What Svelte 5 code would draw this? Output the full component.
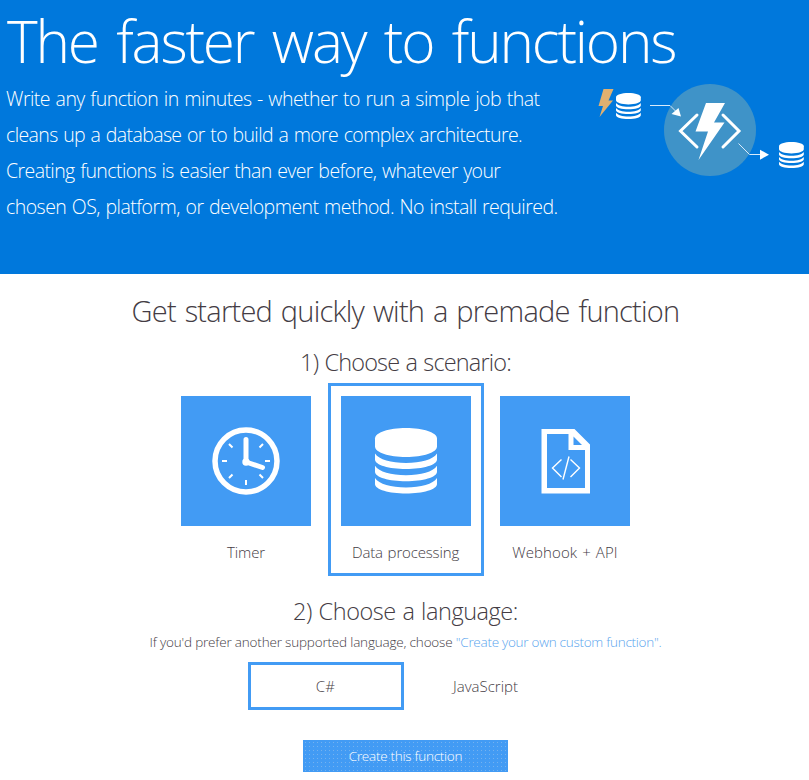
<script>
  let scenario = $state('data');
  let language = $state('csharp');
  const intro = [
    ['Write any function in minutes - whether to run a simple job that', -0.52],
    ['cleans up a database or to build a more complex architecture.', -0.6],
    ['Creating functions is easier than ever before, whatever your', -0.58],
    ['chosen OS, platform, or development method. No install required.', -0.53]
  ];
  const scenarios = [
    { id: 'timer', label: 'Timer', spacing: -0.1 },
    { id: 'data', label: 'Data processing', spacing: -0.15 },
    { id: 'webhook', label: 'Webhook + API', spacing: 0.1 }
  ];
  const languages = [
    { id: 'csharp', label: 'C#', spacing: 0.3 },
    { id: 'js', label: 'JavaScript', spacing: 0 }
  ];
</script>

{#snippet disks()}
  <path d="M0 10.5C0 4.5 14 0 31 0s31 4.5 31 10.5v8C62 24.500 48 29 31 29S0 24.500 0 18.500z" />
  {#each [0, 12.300, 24.600] as dy}
    <path transform="translate(0 {dy})" d="M0 25.500C4 31.500 16 35 31 35s27-3.500 31-9.500v6C62 37 48 41 31 41S0 37 0 31.500z" />
  {/each}
{/snippet}

<main>
  <header>
    <div class="copy">
      <h1>The faster way to functions</h1>
      <p>
        {#each intro as [line, spacing]}
          <span style="letter-spacing:{spacing}px">{line}</span>
        {/each}
      </p>
    </div>
    <svg class="hero" width="219" height="110" viewBox="0 0 219 110" fill="#fff">
      <path fill="#e0b070" d="M13.500 14H23.500L18.500 25.500H23L9.500 42L13 31H8.500z" />
      <g transform="translate(26 18) scale(.4 .395)">{@render disks()}</g>
      <circle cx="120" cy="55" r="46" fill="#3f93c8" />
      <path d="M107 40 90.500 56l16.500 16M133 40l16 16-16 16" fill="none" stroke="#fff" stroke-width="3" stroke-linecap="round" />
      <path d="M116 28h19l-11 19.500h10.500L108.500 85l9.500-28.500h-12.500z" />
      <path d="M60 30.500h20l6 6M148.500 68.500l11 11H171" fill="none" stroke="#d7eafb" />
      <path d="m91 41.500-2.500-8.500-7 6zM179 79.700l-9-5v10z" />
      <g transform="translate(189 67) scale(.4 .395)">{@render disks()}</g>
    </svg>
  </header>

  <section>
    <h2>Get started quickly with a premade function</h2>
    <h3 class="first">1) Choose a scenario:</h3>
    <div class="cards">
      {#each scenarios as s}
        <button class="card" class:selected={scenario === s.id} onclick={() => (scenario = s.id)}>
          <svg width="130" height="130" viewBox="0 0 130 130" fill="#fff">
            {#if s.id === 'timer'}
              <circle cx="65" cy="65" r="31" fill="none" stroke="#fff" stroke-width="5.500" />
              <path d="M65 43.500V66l16.500 5.500" fill="none" stroke="#fff" stroke-width="5" stroke-linecap="round" stroke-linejoin="round" />
              <circle cx="65" cy="66" r="3.700" />
              <path d="M65 84v5M41 65h5M84 65h5M48 48l3.500 3.500M82 48l-3.500 3.500M48 82l3.500-3.500M82 82l-3.500-3.500" fill="none" stroke="#fff" stroke-width="2" />
            {:else if s.id === 'data'}
              <g transform="translate(34 32)">{@render disks()}</g>
            {:else}
              <path fill-rule="evenodd" d="M41.500 33h33L90 48.500v49H41.500zM47 38v54H85V54H68.500V38zM73.500 40.500V49H82z" />
              <path d="M61.500 63.500 52.500 72l9 9M70.500 63.500l9 8.500-9 9M69 60.500 63 83.500" fill="none" stroke="#fff" stroke-width="1.400" />
            {/if}
          </svg>
          <span style="letter-spacing:{s.spacing}px">{s.label}</span>
        </button>
      {/each}
    </div>

    <h3 class="second">2) Choose a language:</h3>
    <p class="note"><span>If you'd prefer another supported language, choose{' '}</span><a href="#custom">"Create your own custom function".</a></p>
    <div class="languages">
      {#each languages as l}
        <button class="language" class:selected={language === l.id} onclick={() => (language = l.id)}>
          <span style="letter-spacing:{l.spacing}px">{l.label}</span>
        </button>
      {/each}
    </div>
    <button class="create"><span>Create this function</span></button>
  </section>
</main>

<style>
  :global(body) { margin: 0; background: #fff; }
  main {
    width: 809px; height: 780px; overflow: hidden; background: #fff;
    font-family: "Open Sans", "Noto Sans", sans-serif; font-weight: 300; color: #443c44;
  }
  h1, h2, h3, p { margin: 0; font-weight: 300; white-space: nowrap; }
  button { font: inherit; color: inherit; background: none; border: 0; padding: 0; margin: 0; box-sizing: border-box; white-space: nowrap; }
  header { height: 274px; background: #0078dc; color: #fff; display: flex; overflow: hidden; }
  .copy { width: 590px; flex: none; padding: 0 0 0 6px; box-sizing: border-box; }
  h1 { font-size: 58.500px; line-height: 80px; height: 81px; padding-left: 1px; letter-spacing: -2.200px; word-spacing: 5.500px; }
  header p { font-size: 19.500px; line-height: 36px; word-spacing: 1px; }
  header p span { display: block; }
  .hero { flex: none; margin-top: 75px; }
  section { display: flex; flex-direction: column; align-items: center; padding-left: 2px; }
  h2 { font-size: 29px; line-height: 40px; margin-top: 17px; letter-spacing: -0.760px; word-spacing: 2px; }
  h3 { font-size: 23.500px; line-height: 32px; letter-spacing: -0.850px; word-spacing: 1px; }
  .first { margin-top: 15px; }
  .cards { display: flex; gap: 3.500px; margin-top: 5px; }
  .card { width: 156px; height: 193px; border: 3px solid transparent; display: flex; flex-direction: column; align-items: center; padding-top: 10px; font-size: 15px; word-spacing: 1px; }
  .card svg { background: #429bf4; flex: none; }
  .card span { line-height: 20px; margin-top: 16px; }
  .selected { border-color: #429bf4; }
  .second { margin-top: 19px; letter-spacing: -0.450px; }
  .note { font-size: 13.500px; line-height: 20px; margin-top: 5px; letter-spacing: -0.180px; white-space: pre; }
  .note a { color: #5aa5ee; text-decoration: none; letter-spacing: -0.270px; }
  .languages { display: flex; gap: 4px; margin-top: 10px; }
  .language { width: 156px; height: 48px; border: 3px solid transparent; font-size: 15px; }
  .language.selected { border-color: #429bf4; }
  .create {
    width: 205px; height: 32px; margin-top: 30px; color: #fff; font-size: 13.500px; letter-spacing: -0.270px;
    background: #429bf4 conic-gradient(from 0deg at 1px 1px, transparent 75%, #75b2ef 0) 2px 2px / 4px 4px;
  }
</style>
